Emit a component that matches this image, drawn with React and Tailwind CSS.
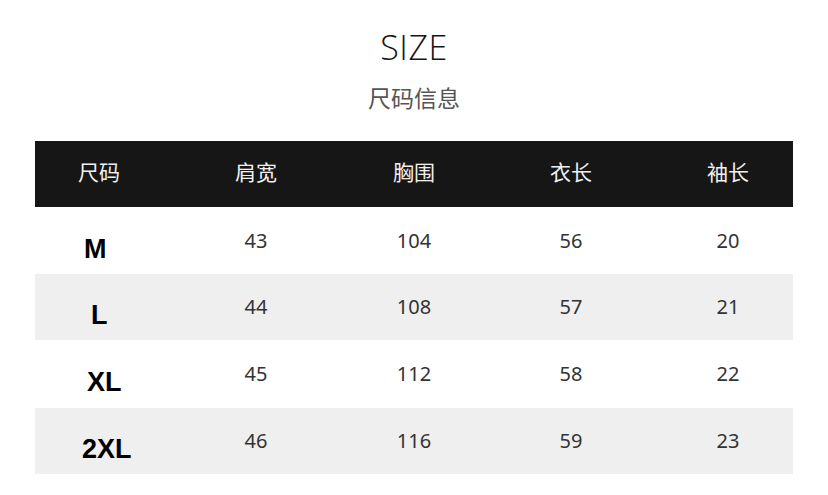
export default function App() {
  const headers = ["尺码", "肩宽", "胸围", "衣长", "袖长"];
  const rows = [
    { size: "M", vals: ["43", "104", "56", "20"], bg: "bg-white", h: "h-[67px]", pad: "pl-[49px]" },
    { size: "L", vals: ["44", "108", "57", "21"], bg: "bg-[#efefef]", h: "h-[66px]", pad: "pl-[56px]" },
    { size: "XL", vals: ["45", "112", "58", "22"], bg: "bg-white", h: "h-[68px]", pad: "pl-[52px]" },
    { size: "2XL", vals: ["46", "116", "59", "23"], bg: "bg-[#efefef]", h: "h-[66px]", pad: "pl-[47px]" },
  ];
  const cols = "grid grid-cols-[128px_186px_130px_184px_130px]";
  return (
    <div className="w-[828px] h-[495px] bg-white overflow-hidden flex flex-col items-center font-['Noto_Sans','Noto_Sans_CJK_SC',sans-serif]">
      <div className="pt-[25px] text-[34px] leading-[44px] font-light text-[#151515] tracking-[0.5px] font-['Open_Sans',sans-serif]">
        SIZE
      </div>
      <div className="mt-[12px] text-[23px] leading-[32px] text-[#555] font-['Noto_Sans_CJK_SC',sans-serif]">
        尺码信息
      </div>
      <div className="mt-[28px] w-[758px] flex flex-col">
        <div className={`${cols} h-[66px] bg-[#161616] items-center pb-[4px]`}>
          {headers.map((h) => (
            <div key={h} className="text-center text-[21px] text-[#f0f0f0] font-['Noto_Sans_CJK_SC',sans-serif]">
              {h}
            </div>
          ))}
        </div>
        {rows.map((r) => (
          <div key={r.size} className={`${cols} ${r.h} ${r.bg} items-center`}>
            <div className={`${r.pad} pt-[17px] text-[27px] font-bold text-black leading-none font-['Liberation_Sans',Arial,sans-serif]`}>
              {r.size}
            </div>
            {r.vals.map((v, i) => (
              <div key={i} className="text-center text-[20px] text-[#333] leading-none">
                {v}
              </div>
            ))}
          </div>
        ))}
      </div>
    </div>
  );
}
